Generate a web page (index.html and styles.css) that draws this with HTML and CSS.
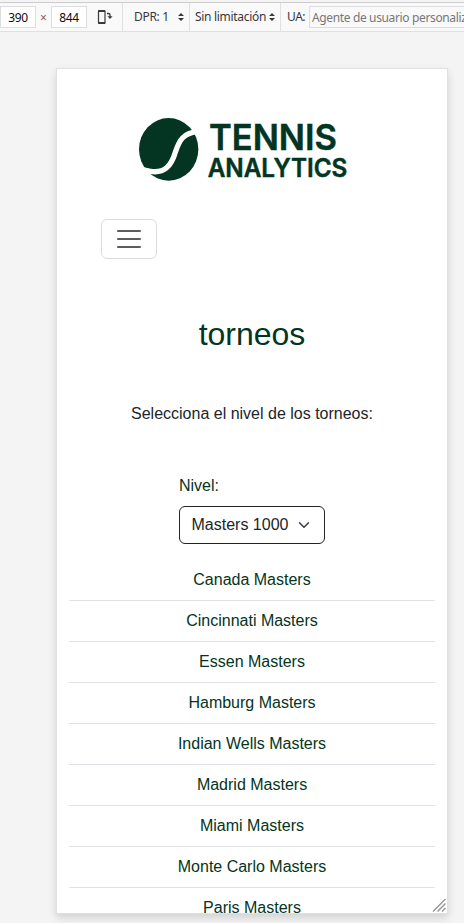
FILE: index.html
```html
<!DOCTYPE html>
<html lang="es">
<head>
<meta charset="utf-8">
<title>Tennis Analytics</title>
<link rel="stylesheet" href="styles.css">
</head>
<body>
<div class="toolbar">
  <div class="group size">
    <span class="num">390</span><span class="times">×</span><span class="num">844</span>
    <svg class="rotate" width="16" height="16" viewBox="0 0 16 16" fill="none" stroke="#38383d"><rect x="1.500" y="2" width="6.500" height="12" rx=".6" stroke-width="1.2"/><path d="M1.200 2h7M1.200 14h7" stroke-width="1.8"/><path d="M10 4.500h1.500q1.500 0 1.500 1.500v2" stroke-width="1.300"/><path d="M10.500 7.200h5L13 10z" fill="#38383d" stroke="none"/></svg>
  </div>
  <div class="group dpr"><span class="label-dpr">DPR: 1</span><svg width="6" height="8" viewBox="0 0 6 8"><path d="M0 3L3 0l3 3zM0 5l3 3 3-3z" fill="#38383d"/></svg></div>
  <div class="group limit"><span class="label-limit">Sin limitación</span><svg width="6" height="8" viewBox="0 0 6 8"><path d="M0 3L3 0l3 3zM0 5l3 3 3-3z" fill="#38383d"/></svg></div>
  <div class="group agent"><span class="label-ua">UA:</span><span class="field">Agente de usuario personalizado</span></div>
</div>
<main class="viewport">
  <svg class="logo" width="230" height="90" viewBox="0 0 690 270">
    <ellipse cx="116" cy="133" rx="89" ry="94" fill="#033522"/>
    <path d="M205 80C160 83 148 106 137 139C124 184 103 206 61 199Q42 196 20 188" fill="none" stroke="#fff" stroke-width="16"/>
    <path d="M20 190L58 195L62 206L40 214z" fill="#fff"/>
    <g class="logo-text">
      <text x="237" y="134" font-size="108" textLength="384" lengthAdjust="spacingAndGlyphs">TENNIS</text>
      <text x="233" y="215" font-size="77" textLength="419" lengthAdjust="spacingAndGlyphs">ANALYTICS</text>
    </g>
  </svg>
  <button class="menu" aria-label="Menú"><svg width="30" height="30" viewBox="0 0 30 30"><path d="M4 7h22M4 15h22M4 23h22" stroke="#5c5d5f" stroke-width="2" stroke-linecap="round"/></svg></button>
  <h1>torneos</h1>
  <p>Selecciona el nivel de los torneos:</p>
  <div class="level">
    <span class="level-label">Nivel:</span>
    <div class="select">Masters 1000<svg width="12" height="12" viewBox="0 0 16 16"><path d="M2 5l6 6 6-6" fill="none" stroke="#343a40" stroke-width="2" stroke-linecap="round" stroke-linejoin="round"/></svg></div>
  </div>
  <ul>
    <li>Canada Masters</li>
    <li>Cincinnati Masters</li>
    <li>Essen Masters</li>
    <li>Hamburg Masters</li>
    <li>Indian Wells Masters</li>
    <li>Madrid Masters</li>
    <li>Miami Masters</li>
    <li>Monte Carlo Masters</li>
    <li>Paris Masters</li>
  </ul>
  <svg class="grip" width="14" height="14" viewBox="0 0 14 14"><path d="M1 13.500L13.500 1M5.500 13.500L13.500 5.500M10 13.500L13.500 10" stroke="#999" stroke-width="1.500"/></svg>
</main>
</body>
</html>
```
FILE: styles.css
```css
* { box-sizing: border-box; }
body {
  margin: 0;
  height: 923px;
  overflow: hidden;
  background: #f4f4f4;
  font-family: "Liberation Sans", Arial, sans-serif;
}
.toolbar {
  display: flex;
  height: 32px;
  padding-top: 2px;
  background: linear-gradient(#f4f4f4 2px, #ccc 2px, #ccc 3px, #f9f9fa 3px);
  border-bottom: 1px solid #e0e0e2;
  font: 12px/28px "Noto Sans", sans-serif;
  color: #38383d;
  white-space: nowrap;
  overflow: hidden;
}
.group {
  display: flex;
  align-items: center;
  flex: none;
  margin-top: 1px;
  height: 28px;
  border-right: 1px solid #e0e0e2;
}
.size { width: 123px; }
.num {
  width: 36px;
  height: 22px;
  border: 1px solid #dddde0;
  line-height: 21px;
  text-align: center;
  color: #0c0c0d;
  background: #fff;
  letter-spacing: -.3px;
}
.times { width: 15px; padding-top: 2px; text-align: center; color: #8a6248; }
.rotate { margin-left: 10px; }
.dpr { width: 67px; padding-left: 11px; }
.label-dpr { width: 44px; letter-spacing: -.3px; }
.limit { width: 91px; padding-left: 5px; }
.label-limit { width: 74px; letter-spacing: -.3px; }
.agent { flex: 1; min-width: 0; padding-left: 6px; border-right: 0; }
.label-ua { flex: none; width: 22px; letter-spacing: -.5px; }
.field {
  flex: 1;
  min-width: 0;
  height: 22px;
  border: 1px solid #dddde0;
  border-right: 0;
  padding-left: 2px;
  line-height: 21px;
  color: #777;
  letter-spacing: -.36px;
  overflow: hidden;
}
.viewport {
  position: relative;
  width: 392px;
  height: 846px;
  margin: 36px 0 0 56px;
  padding: 36px 12px 0;
  border: 1px solid #e0e0e2;
  background: #fff;
  box-shadow: 0 4px 8px rgba(0, 0, 0, .14);
  overflow: hidden;
  color: #033522;
  font-size: 16px;
  line-height: 24px;
}
.logo { display: block; margin-left: 61px; }
.logo-text { font-family: Inter, sans-serif; font-weight: 600; fill: #033522; stroke: #033522; stroke-width: 1.5px; }
.menu {
  display: block;
  width: 56px;
  height: 40px;
  margin: 24px 0 0 32px;
  padding: 4px 12px;
  border: 1px solid #dcdcdd;
  border-radius: 6px;
  background: #fff;
}
.menu svg { display: block; }
h1 {
  margin: 56px 0 0;
  font-size: 32px;
  line-height: 38px;
  font-weight: 400;
  text-align: center;
}
p { margin: 49px 0 48px; text-align: center; color: #212529; }
.level { width: 146px; margin-left: 110px; }
.level-label { display: block; margin-bottom: 8px; }
.select {
  display: flex;
  align-items: center;
  height: 38px;
  padding-left: 11.5px;
  border: 1px solid #212529;
  border-radius: 6px;
  color: #212529;
}
.select svg { margin-left: 9.5px; }
ul { list-style: none; margin: 16px 0 0; padding: 0; }
li {
  height: 41px;
  padding: 8px 0;
  border-bottom: 1px solid #dee2e6;
  text-align: center;
}
.grip { position: absolute; right: 1px; bottom: 1px; }
```
